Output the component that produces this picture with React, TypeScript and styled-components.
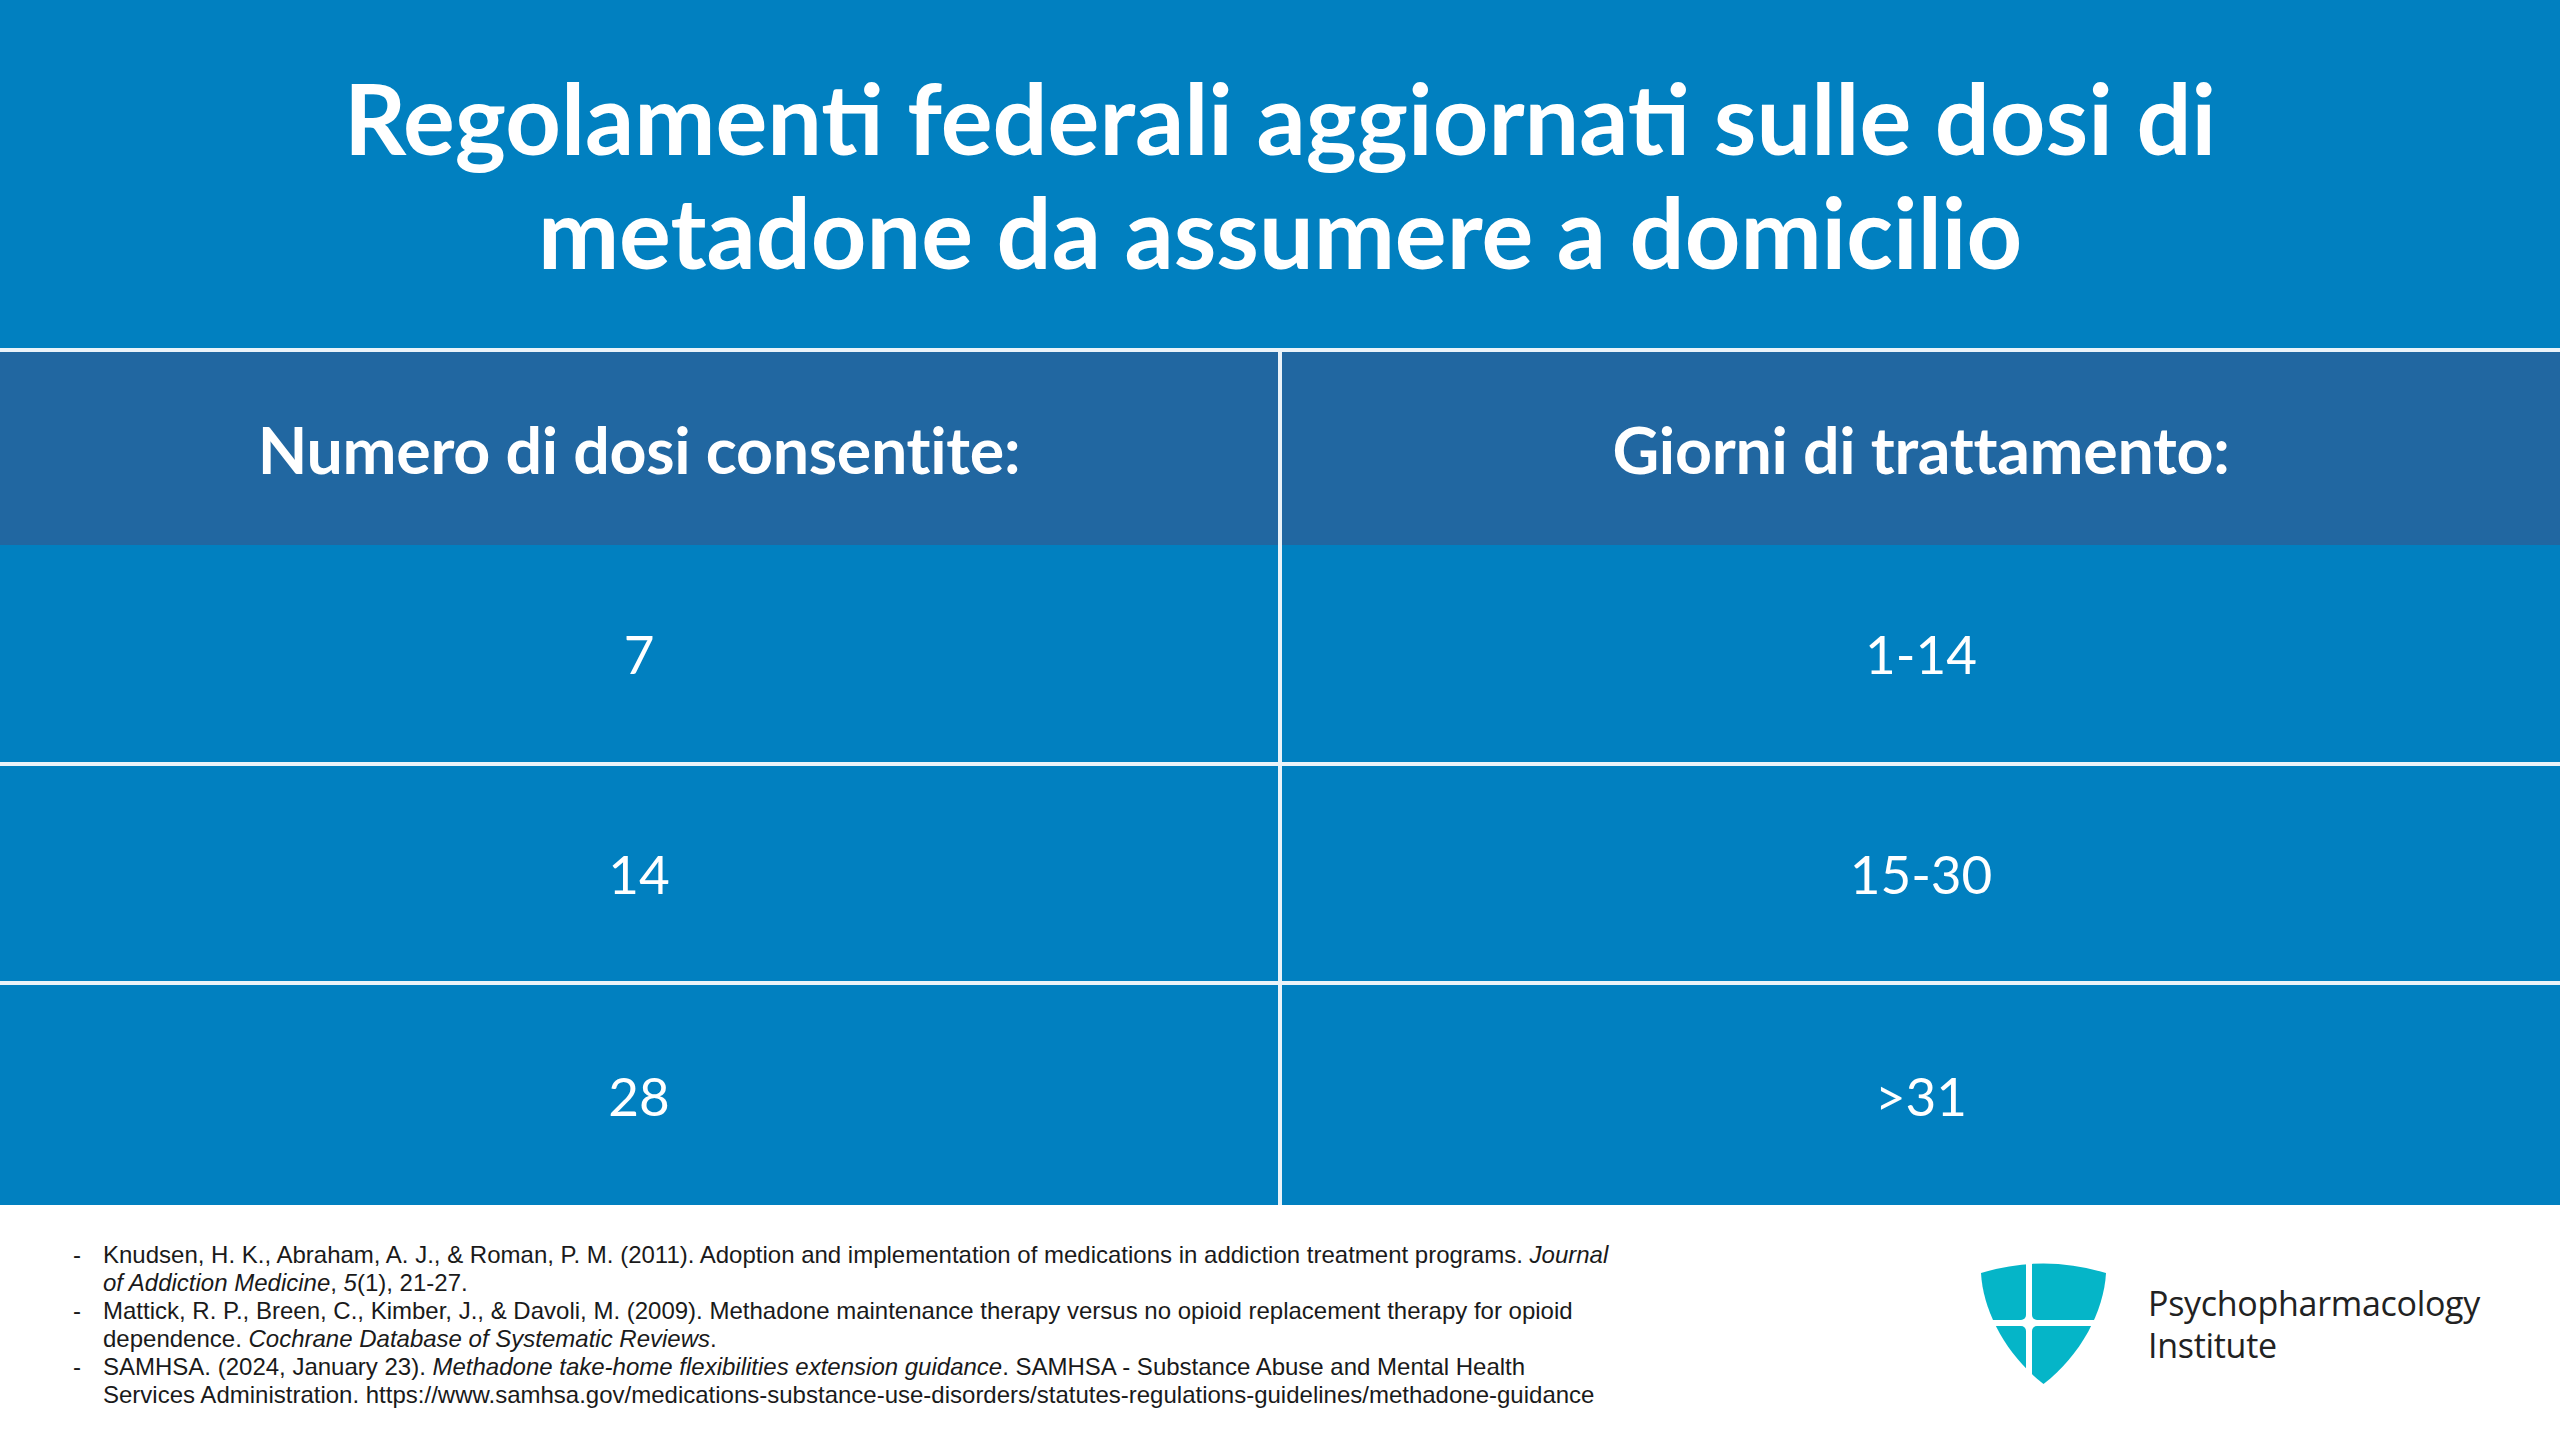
import React from "react";
import styled, {createGlobalStyle} from "styled-components";

const GlobalStyle = createGlobalStyle`
    html, body {
        margin: 0;
        padding: 0;
        background: #ffffff;
    }
    body {
        width: 2560px;
        height: 1440px;
        overflow: hidden;
    }
`

const Page = styled.div`
    width: 2560px;
    height: 1440px;
    display: flex;
    flex-direction: column;
    background: #ffffff;
`

const TitleBar = styled.header`
    height: 348px;
    background: #0180c0;
    display: flex;
    align-items: center;
    justify-content: center;
    h1{
        margin: 0;
        color: #ffffff;
        font-family: "Lato", "Noto Sans", sans-serif;
        font-weight: 700;
        font-size: 97px;
        line-height: 114px;
        text-align: center;
        padding-top: 2px;
    }
`

const Table = styled.section`
    display: grid;
    grid-template-columns: 1278px 1278px;
    column-gap: 4px;
    background: #eaf3f9;
    border-top: 4px solid #eaf3f9;
`

const HeadCell = styled.div`
    height: 193px;
    background: #2167a1;
    display: flex;
    align-items: center;
    justify-content: center;
    color: #ffffff;
    font-family: "Lato", "Noto Sans", sans-serif;
    font-weight: 700;
    font-size: 64.5px;
    letter-spacing: -0.3px;
`

const Cell = styled.div<{$divided: boolean; $height: number}>`
    height: ${p => p.$height}px;
    margin-top: ${p => p.$divided ? 4 : 0}px;
    background: #0180c0;
    display: flex;
    align-items: center;
    justify-content: center;
    color: #ffffff;
    font-family: "Lato", "Noto Sans", sans-serif;
    font-weight: 400;
    font-size: 53px;
`

const Footer = styled.footer`
    flex: 1;
    display: flex;
    align-items: center;
    justify-content: space-between;
    padding: 0 80px 0 73px;
`

const Refs = styled.ul`
    list-style: none;
    margin: 4px 0 0 0;
    padding: 0;
    width: 1580px;
    font-family: "Liberation Sans", Arial, sans-serif;
    font-size: 24px;
    line-height: 28px;
    color: #1a1a1a;
    li{
        padding-left: 30px;
        text-indent: -30px;
    }
    li::before{
        content: "-";
        display: inline-block;
        width: 30px;
        text-indent: 0;
    }
`

const Brand = styled.div`
    display: flex;
    align-items: center;
    gap: 42px;
    margin-top: 2px;
`

const BrandName = styled.div`
    font-family: "Open Sans", "Noto Sans", sans-serif;
    font-weight: 400;
    font-size: 34px;
    line-height: 42px;
    color: #222222;
    letter-spacing: -0.3px;
`

type Row = {doses: string; days: string; height: number};

const rows: Row[] = [
    {doses: "7", days: "1-14", height: 217},
    {doses: "14", days: "15-30", height: 215},
    {doses: "28", days: ">31", height: 220},
]

const Shield = ()=>{
    const outline = "M0,10 Q62.5,-9 125,10 C123,48 100,92 62.5,121 C25,92 2,48 0,10 Z";
    return (<svg width="125" height="122" viewBox="0 0 125 122">
        <defs>
            <clipPath id="shield-clip">
                <path d={outline}/>
            </clipPath>
        </defs>
        <g clipPath="url(#shield-clip)" fill="#05b5c8">
            <rect x="-30" y="-30" width="75" height="87" rx="5"/>
            <rect x="51" y="-30" width="110" height="87" rx="5"/>
            <rect x="-30" y="63" width="75" height="90" rx="5"/>
            <rect x="51" y="63" width="110" height="90" rx="5"/>
        </g>
    </svg>)
}

export default function App(){
    return (<>
        <GlobalStyle/>
        <Page>
            <TitleBar>
                <h1>Regolamenti federali aggiornati sulle dosi di<br/>metadone da assumere a domicilio</h1>
            </TitleBar>
            <Table>
                <HeadCell>Numero di dosi consentite:</HeadCell>
                <HeadCell>Giorni di trattamento:</HeadCell>
                {
                    rows.map((row, i)=>{
                        return <React.Fragment key={row.doses}>
                            <Cell $divided={i > 0} $height={row.height}>{row.doses}</Cell>
                            <Cell $divided={i > 0} $height={row.height}>{row.days}</Cell>
                        </React.Fragment>
                    })
                }
            </Table>
            <Footer>
                <Refs>
                    <li>Knudsen, H. K., Abraham, A. J., &amp; Roman, P. M. (2011). Adoption and implementation of medications in addiction treatment programs. <i>Journal</i><br/><i>of Addiction Medicine</i>, <i>5</i>(1), 21-27.</li>
                    <li>Mattick, R. P., Breen, C., Kimber, J., &amp; Davoli, M. (2009). Methadone maintenance therapy versus no opioid replacement therapy for opioid<br/>dependence. <i>Cochrane Database of Systematic Reviews</i>.</li>
                    <li>SAMHSA. (2024, January 23). <i>Methadone take-home flexibilities extension guidance</i>. SAMHSA - Substance Abuse and Mental Health<br/>Services Administration. https://www.samhsa.gov/medications-substance-use-disorders/statutes-regulations-guidelines/methadone-guidance</li>
                </Refs>
                <Brand>
                    <Shield/>
                    <BrandName>Psychopharmacology<br/>Institute</BrandName>
                </Brand>
            </Footer>
        </Page>
    </>)
}
